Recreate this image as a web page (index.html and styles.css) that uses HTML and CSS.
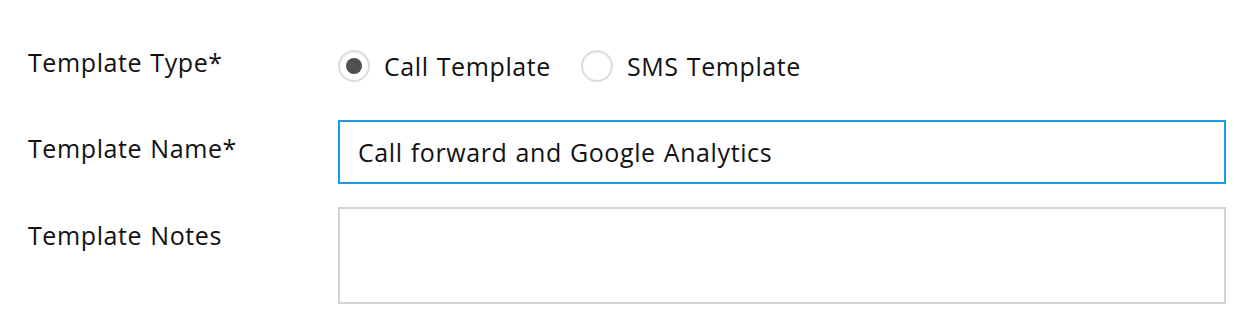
FILE: index.html
```html
<!DOCTYPE html>
<html>
<head>
<meta charset="utf-8">
<link rel="stylesheet" href="styles.css">
</head>
<body>
<form class="form">
  <div class="row row-type">
    <div class="label">Template Type*</div>
    <div class="field radios">
      <label class="radio"><span class="dot checked"></span><span class="rtext">Call Template</span></label>
      <label class="radio"><span class="dot"></span><span class="rtext">SMS Template</span></label>
    </div>
  </div>
  <div class="row row-name">
    <div class="label">Template Name*</div>
    <div class="field"><div class="input focused">Call forward and Google Analytics</div></div>
  </div>
  <div class="row row-notes">
    <div class="label">Template Notes</div>
    <div class="field"><div class="textarea"></div></div>
  </div>
</form>
</body>
</html>
```
FILE: styles.css
```css
html, body {
  margin: 0;
  padding: 0;
  background: #fff;
}
body {
  font-family: "Open Sans", "Lato", sans-serif;
  font-size: 25px;
  letter-spacing: 0.6px;
  word-spacing: 1px;
  color: #111;
}
.form {
  display: flex;
  flex-direction: column;
  padding: 46px 28px 0 28px;
  width: 1254px;
  box-sizing: border-box;
}
.row {
  display: grid;
  grid-template-columns: 310px 1fr;
}
.label {
  line-height: 32px;
}
.row-type { height: 74px; }
.radios {
  display: flex;
  align-items: center;
  height: 40px;
}
.radio {
  display: flex;
  align-items: center;
}
.radio + .radio { margin-left: 30px; }
.dot {
  width: 32px;
  height: 32px;
  border-radius: 50%;
  border: 2px solid #dcdcdc;
  box-shadow: inset 0 1px 2px rgba(0,0,0,0.08);
  display: flex;
  align-items: center;
  justify-content: center;
  box-sizing: border-box;
  margin-right: 14px;
}
.dot.checked::after {
  content: "";
  width: 16px;
  height: 16px;
  border-radius: 50%;
  background: #505050;
}
.rtext { line-height: 32px; }
.row-name { height: 87px; }
.row-name .label { margin-top: 12px; }
.input {
  height: 64px;
  border: 2px solid #1a9de2;
  box-sizing: border-box;
  padding: 0 18px;
  display: flex;
  align-items: center;
}
.row-notes .label { margin-top: 12px; }
.textarea {
  height: 97px;
  border: 2px solid #d3d3d3;
  box-sizing: border-box;
}
```
